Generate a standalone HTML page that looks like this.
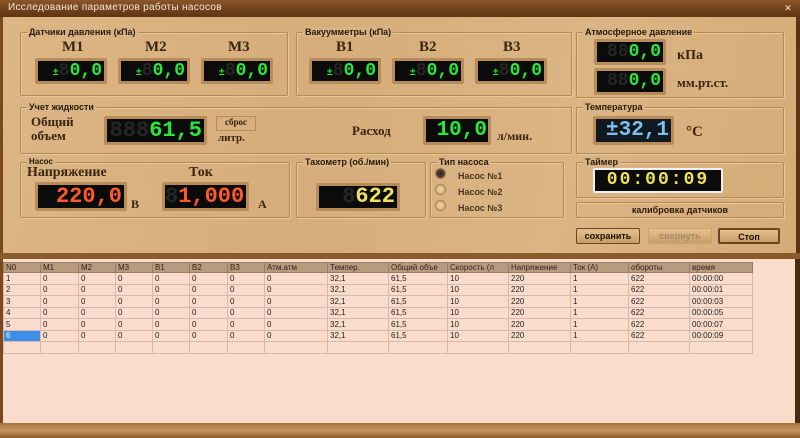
<!DOCTYPE html>
<html><head><meta charset="utf-8"><style>
*{margin:0;padding:0;box-sizing:border-box}
body{width:800px;height:438px;overflow:hidden;position:relative;background:#f9dccb;font-family:"Liberation Sans",sans-serif}
.abs{position:absolute}
#title{left:0;top:0;width:800px;height:17px;background:linear-gradient(#8a5528,#5e3413);color:#f4e6d0;font-size:10px;padding:2px 0 0 8px;letter-spacing:0.3px}
#body{left:0;top:17px;width:800px;height:238px;background:linear-gradient(100deg,#dcb684,#d5ad7a 40%,#dbb584 70%,#d4ac78);border-left:3px solid #7a4a1e;border-right:4px solid #5a3512}
#strip{left:0;top:253px;width:800px;height:6px;background:#8a5a2a}
.pan{position:absolute;border:1px solid #b28a58;box-shadow:inset 1px 1px 0 #e8c896,1px 1px 0 #e8c896;border-radius:2px}
.lbl{position:absolute;font-size:9px;font-weight:bold;color:#2a1a0a;background:#d9b383;padding:0 2px;top:-6px;left:6px;white-space:nowrap}
.big{position:absolute;font-family:"Liberation Serif",serif;font-weight:bold;color:#3a2410;font-size:15px;white-space:nowrap}
.d{position:absolute;background:#0b0b0b;border:3px solid #b88c58;border-radius:2px;font-family:"Liberation Mono",monospace;font-weight:bold;text-align:right;padding-right:2px;white-space:nowrap;overflow:hidden;letter-spacing:0}
.g{color:#262626}
.gr{color:#28e83a}
.btn{position:absolute;height:16px;border:1px solid #6a4520;background:linear-gradient(#e4c08e,#c99c66);font-size:9px;font-weight:bold;text-align:center;line-height:14px;color:#1a1008;border-radius:2px}
.rad{position:absolute;width:11px;height:11px;border-radius:50%;background:radial-gradient(#f0d8a8,#c9a06a);border:1px solid #a98050}
table{position:absolute;left:3px;top:262px;border-collapse:collapse;font-size:8px;color:#222}
td{border:1px solid #d8b8a8;height:11.5px;padding:0 2px;white-space:nowrap;overflow:hidden}
tr.h td{background:#b89a80;color:#3a2010;height:10px;border-color:#9a7a60}
#bot{left:0;top:423px;width:800px;height:15px;background:linear-gradient(#a4743e,#c4965e,#8a5a2a)}
#lb{left:0;top:259px;width:3px;height:170px;background:#7a4a1e}
#rb{left:795px;top:259px;width:5px;height:170px;background:#4a2a10}
</style></head><body>
<div id="title" class="abs">Исследование параметров работы насосов<span style="position:absolute;right:8px;top:3px;font-size:9px">✕</span></div>
<div id="body" class="abs"></div>
<div id="strip" class="abs"></div>

<div class="pan" style="left:20px;top:32px;width:268px;height:64px"><span class="lbl">Датчики давления (кПа)</span></div>
<div class="big" style="left:62px;top:39px">M1</div>
<div class="big" style="left:145px;top:39px">M2</div>
<div class="big" style="left:228px;top:39px">M3</div>
<div class="d" style="left:35px;top:58px;width:72px;height:26px;font-size:18px;line-height:20px"><span style="color:#28e83a;font-size:10px">±</span><span class="g">8</span><span class="gr">0,0</span></div>
<div class="d" style="left:118px;top:58px;width:72px;height:26px;font-size:18px;line-height:20px"><span style="color:#28e83a;font-size:10px">±</span><span class="g">8</span><span class="gr">0,0</span></div>
<div class="d" style="left:201px;top:58px;width:72px;height:26px;font-size:18px;line-height:20px"><span style="color:#28e83a;font-size:10px">±</span><span class="g">8</span><span class="gr">0,0</span></div>

<div class="pan" style="left:296px;top:32px;width:276px;height:64px"><span class="lbl">Вакуумметры (кПа)</span></div>
<div class="big" style="left:336px;top:39px">B1</div>
<div class="big" style="left:419px;top:39px">B2</div>
<div class="big" style="left:503px;top:39px">B3</div>
<div class="d" style="left:309px;top:58px;width:72px;height:26px;font-size:18px;line-height:20px"><span style="color:#28e83a;font-size:10px">±</span><span class="g">8</span><span class="gr">0,0</span></div>
<div class="d" style="left:392px;top:58px;width:72px;height:26px;font-size:18px;line-height:20px"><span style="color:#28e83a;font-size:10px">±</span><span class="g">8</span><span class="gr">0,0</span></div>
<div class="d" style="left:475px;top:58px;width:72px;height:26px;font-size:18px;line-height:20px"><span style="color:#28e83a;font-size:10px">±</span><span class="g">8</span><span class="gr">0,0</span></div>

<div class="pan" style="left:576px;top:32px;width:208px;height:66px"><span class="lbl">Атмосферное давление</span></div>
<div class="d" style="left:594px;top:39px;width:72px;height:26px;font-size:18px;line-height:20px"><span class="g">88</span><span class="gr">0,0</span></div>
<div class="d" style="left:594px;top:68px;width:72px;height:27px;font-size:18px;line-height:21px"><span class="g">88</span><span class="gr">0,0</span></div>
<div class="big" style="left:677px;top:48px;font-size:14px">кПа</div>
<div class="big" style="left:677px;top:75px;font-size:13px">мм.рт.ст.</div>

<div class="pan" style="left:20px;top:107px;width:552px;height:47px"><span class="lbl">Учет жидкости</span></div>
<div class="big" style="left:31px;top:115px;font-size:13px;line-height:14px">Общий<br>объем</div>
<div class="d" style="left:104px;top:116px;width:103px;height:29px;font-size:22px;line-height:23px"><span class="g">888</span><span class="gr">61,5</span></div>
<div style="position:absolute;left:216px;top:116px;width:40px;height:15px;border:1px solid #b88c58;font-family:'Liberation Serif',serif;font-size:9px;font-weight:bold;text-align:center;color:#3a2410">сброс</div>
<div class="big" style="left:218px;top:132px;font-size:11px">литр.</div>
<div class="big" style="left:352px;top:123px;font-size:13px">Расход</div>
<div class="d" style="left:423px;top:116px;width:68px;height:29px;font-size:21px;line-height:23px;padding-right:1px"><span class="gr">10,0</span></div>
<div class="big" style="left:497px;top:129px;font-size:12px">л/мин.</div>

<div class="pan" style="left:576px;top:107px;width:208px;height:47px"><span class="lbl">Температура</span></div>
<div class="d" style="left:593px;top:116px;width:81px;height:29px;font-size:21px;line-height:23px;color:#7cc0f0;background:#101820">±32,1</div>
<div class="big" style="left:686px;top:124px;font-size:15px">°C</div>

<div class="pan" style="left:20px;top:162px;width:270px;height:56px"><span class="lbl" style="font-size:8px">Насос</span></div>
<div class="big" style="left:27px;top:165px;font-size:14px">Напряжение</div>
<div class="big" style="left:189px;top:165px;font-size:14px">Ток</div>
<div class="d" style="left:35px;top:182px;width:92px;height:29px;font-size:22px;line-height:23px;color:#ff5a28">220,0</div>
<div class="big" style="left:131px;top:197px;font-size:12px">В</div>
<div class="d" style="left:162px;top:182px;width:87px;height:29px;font-size:22px;line-height:23px;color:#ff5a28"><span class="g">8</span>1,000</div>
<div class="big" style="left:258px;top:197px;font-size:12px">А</div>

<div class="pan" style="left:296px;top:162px;width:130px;height:56px"><span class="lbl">Тахометр (об./мин)</span></div>
<div class="d" style="left:316px;top:183px;width:84px;height:28px;font-size:22px;line-height:22px;color:#f0e060"><span class="g">8</span>622</div>

<div class="pan" style="left:430px;top:162px;width:134px;height:56px"><span class="lbl">Тип насоса</span></div>
<div class="rad" style="left:435px;top:168px;background:radial-gradient(#222,#7a5a3a)"></div>
<div class="rad" style="left:435px;top:184px"></div>
<div class="rad" style="left:435px;top:200px"></div>
<div style="position:absolute;left:458px;top:168px;font-size:9px;font-weight:bold;color:#4a3420;line-height:16px">Насос №1<br>Насос №2<br>Насос №3</div>

<div class="pan" style="left:576px;top:162px;width:208px;height:36px"><span class="lbl">Таймер</span></div>
<div class="d" style="left:593px;top:168px;width:130px;height:25px;border:2px solid #f0f0f0;font-size:18px;line-height:21px;color:#f0e060;text-align:center;padding:0;letter-spacing:2px">00:00:09</div>
<div class="pan" style="left:576px;top:202px;width:208px;height:16px;font-size:9px;font-weight:bold;text-align:center;line-height:14px;color:#2a1a0a">калибровка датчиков</div>

<div class="btn" style="left:576px;top:228px;width:64px">сохранить</div>
<div class="btn" style="left:648px;top:228px;width:64px;color:#a88a68;border-color:#c9a070">свернуть</div>
<div class="btn" style="left:718px;top:228px;width:62px;border-width:2px">Стоп</div>

<table>
<tr class="h"><td style="width:37px">N0</td><td style="width:38px">M1</td><td style="width:37px">M2</td><td style="width:37px">M3</td><td style="width:37px">B1</td><td style="width:38px">B2</td><td style="width:37px">B3</td><td style="width:63px">Атм.атм</td><td style="width:61px">Темпер.</td><td style="width:59px">Общий объе</td><td style="width:61px">Скорость (л</td><td style="width:62px">Напряжение</td><td style="width:58px">Ток (А)</td><td style="width:61px">обороты</td><td style="width:63px">время</td></tr>
<tr><td>1</td><td>0</td><td>0</td><td>0</td><td>0</td><td>0</td><td>0</td><td>0</td><td>32,1</td><td>61,5</td><td>10</td><td>220</td><td>1</td><td>622</td><td>00:00:00</td></tr>
<tr><td>2</td><td>0</td><td>0</td><td>0</td><td>0</td><td>0</td><td>0</td><td>0</td><td>32,1</td><td>61,5</td><td>10</td><td>220</td><td>1</td><td>622</td><td>00:00:01</td></tr>
<tr><td>3</td><td>0</td><td>0</td><td>0</td><td>0</td><td>0</td><td>0</td><td>0</td><td>32,1</td><td>61,5</td><td>10</td><td>220</td><td>1</td><td>622</td><td>00:00:03</td></tr>
<tr><td>4</td><td>0</td><td>0</td><td>0</td><td>0</td><td>0</td><td>0</td><td>0</td><td>32,1</td><td>61,5</td><td>10</td><td>220</td><td>1</td><td>622</td><td>00:00:05</td></tr>
<tr><td>5</td><td>0</td><td>0</td><td>0</td><td>0</td><td>0</td><td>0</td><td>0</td><td>32,1</td><td>61,5</td><td>10</td><td>220</td><td>1</td><td>622</td><td>00:00:07</td></tr>
<tr><td style="background:#3a8ee8;color:#cfe">6</td><td>0</td><td>0</td><td>0</td><td>0</td><td>0</td><td>0</td><td>0</td><td>32,1</td><td>61,5</td><td>10</td><td>220</td><td>1</td><td>622</td><td>00:00:09</td></tr>
<tr><td></td><td></td><td></td><td></td><td></td><td></td><td></td><td></td><td></td><td></td><td></td><td></td><td></td><td></td><td></td></tr>
</table>
<div id="lb" class="abs"></div><div id="rb" class="abs"></div>
<div id="bot" class="abs"></div>
</body></html>
